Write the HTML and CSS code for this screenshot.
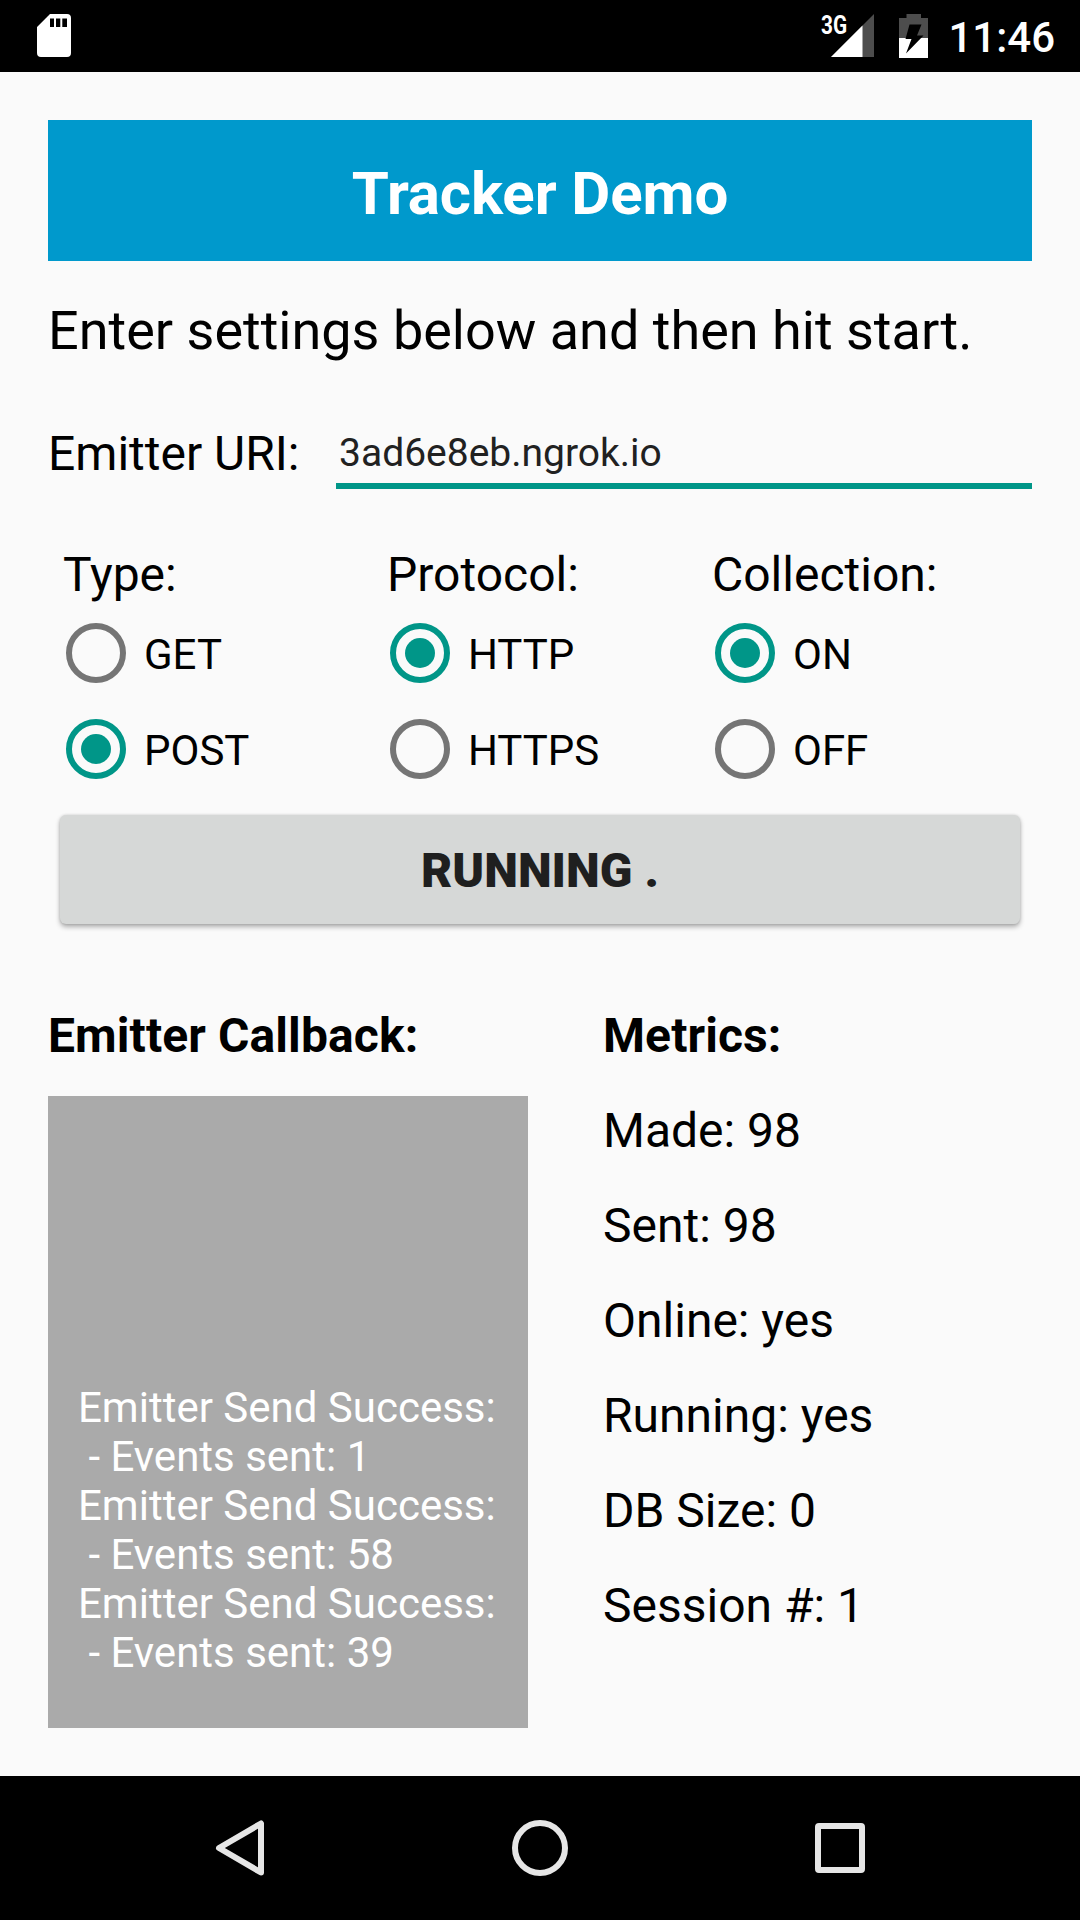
FILE: index.html
```html
<!DOCTYPE html>
<html lang="en">
<head>
<meta charset="utf-8">
<title>Tracker Demo</title>
<link rel="stylesheet" href="styles.css">
</head>
<body>
<header class="status-bar">
  <svg class="sd-icon" width="34" height="43" viewBox="0 0 34 43"><path fill="#fff" fill-rule="evenodd" d="M13 0H30a4 4 0 0 1 4 4V39a4 4 0 0 1-4 4H4a4 4 0 0 1-4-4V13ZM13 4.500V13H17V4.500ZM19 4.500V13H23.300V4.500ZM25.300 4.500V13H30V4.500Z"/></svg>
  <div class="status-right">
    <span class="network">3G</span>
    <svg class="signal" width="43" height="43" viewBox="0 0 43 43"><path fill="#4d4d4d" d="M43 0V43H0Z"/><path fill="#fff" d="M31.500 11.500V43H0Z"/></svg>
    <svg class="battery" width="29" height="44" viewBox="0 0 29 44"><path fill="#4d4d4d" d="M7.500 0H22V4H29V24H0V4H7.500Z"/><path fill="#fff" d="M0 24H29V44H0Z"/><path d="M10.500 10.500H22.500L18 21.500H24.500L7 39.500L12.500 25H6.500Z"/></svg>
    <time class="clock">11:46</time>
  </div>
</header>
<main class="screen">
  <h1 class="title">Tracker Demo</h1>
  <p class="intro">Enter settings below and then hit start.</p>
  <div class="uri-row">
    <label class="label" for="uri">Emitter URI:</label>
    <input class="uri" id="uri" type="text" value="3ad6e8eb.ngrok.io">
  </div>
  <div class="options">
    <section class="group">
      <h2 class="label">Type:</h2>
      <label class="radio"><span class="dot"></span>GET</label>
      <label class="radio"><span class="dot on"></span>POST</label>
    </section>
    <section class="group">
      <h2 class="label">Protocol:</h2>
      <label class="radio"><span class="dot on"></span>HTTP</label>
      <label class="radio"><span class="dot"></span>HTTPS</label>
    </section>
    <section class="group">
      <h2 class="label">Collection:</h2>
      <label class="radio"><span class="dot on"></span>ON</label>
      <label class="radio"><span class="dot"></span>OFF</label>
    </section>
  </div>
  <button class="run">RUNNING .</button>
  <div class="results">
    <section class="callback">
      <h2 class="heading">Emitter Callback:</h2>
      <pre class="log">Emitter Send Success:
 - Events sent: 1
Emitter Send Success:
 - Events sent: 58
Emitter Send Success:
 - Events sent: 39</pre>
    </section>
    <section class="metrics">
      <h2 class="heading">Metrics:</h2>
      <p class="metric">Made: 98</p>
      <p class="metric">Sent: 98</p>
      <p class="metric">Online: yes</p>
      <p class="metric">Running: yes</p>
      <p class="metric">DB Size: 0</p>
      <p class="metric">Session #: 1</p>
    </section>
  </div>
</main>
<nav class="nav-bar">
  <svg width="60" height="60" viewBox="0 0 60 60"><path d="M51 5.500V54.500L9 30Z"/></svg>
  <svg width="60" height="60" viewBox="0 0 60 60"><circle cx="30" cy="30" r="25"/></svg>
  <svg width="60" height="60" viewBox="0 0 60 60"><rect x="8" y="8" width="44" height="44" rx="1"/></svg>
</nav>
</body>
</html>
```

FILE: styles.css
```css
* { box-sizing: border-box; margin: 0; }
body {
  width: 1080px;
  height: 1920px;
  display: flex;
  flex-direction: column;
  background: #fafafa;
  color: #000;
  font-family: Roboto, sans-serif;
  overflow: hidden;
}
svg { display: block; }

.status-bar {
  height: 72px;
  flex: none;
  display: flex;
  align-items: flex-start;
  justify-content: space-between;
  padding: 14px 25px 0 37px;
  background: #000;
  color: #fff;
}
.status-right { display: flex; align-items: flex-start; }
.network {
  margin: -1px -22px 0 0;
  font: 700 26px/24px Roboto, sans-serif;
  transform: scaleX(.8);
  transform-origin: left;
}
.battery { margin-left: 25px; }
.clock {
  margin: 1px 0 0 20px;
  font-size: 42px;
  font-weight: 500;
  line-height: 46px;
}

.screen { flex: 1; padding: 48px 48px 0; }
.title {
  height: 141px;
  background: #0099cc;
  color: #fff;
  font-size: 60px;
  letter-spacing: -.1px;
  line-height: 147px;
  text-align: center;
}
.intro { margin-top: 36px; font-size: 54px; line-height: 67px; }

.uri-row { display: flex; height: 72px; margin-top: 53px; }
.label { font-size: 48px; font-weight: 400; line-height: 56px; white-space: nowrap; }
.uri-row .label { flex: none; width: 288px; padding-top: 9px; }
.uri {
  flex: 1;
  min-width: 0;
  padding: 5px 3px 0;
  border: 0;
  border-bottom: 6px solid #009688;
  outline: 0;
  background: transparent;
  color: #212121;
  font: 39px Roboto, sans-serif;
}

.options { display: grid; grid-template-columns: 324px 325px 324px; margin-top: 58px; padding-left: 15px; }
.group .label { margin-bottom: 2px; }
.radio {
  display: flex;
  align-items: center;
  gap: 18px;
  height: 96px;
  padding: 4px 0 0 3px;
  font-size: 42px;
  line-height: 50px;
}
.dot {
  flex: none;
  display: grid;
  place-items: center;
  width: 60px;
  height: 60px;
  margin-top: -4px;
  border: 6px solid #757575;
  border-radius: 50%;
}
.dot.on { border-color: #009688; }
.dot.on::after { content: ""; width: 30px; height: 30px; border-radius: 50%; background: #009688; }

.run {
  display: block;
  width: 960px;
  height: 109px;
  margin: 18px 12px 0;
  padding: 3px 0 0;
  border: 0;
  border-radius: 6px;
  background: #d6d8d7;
  box-shadow: 0 3px 5px rgba(0, 0, 0, .3), 0 0 3px rgba(0, 0, 0, .15);
  color: #1f1f1f;
  font: 900 48px/56px Roboto, sans-serif;
}

.results { display: grid; grid-template-columns: 480px 1fr; column-gap: 75px; margin-top: 83px; }
.heading { font-size: 48px; letter-spacing: .1px; line-height: 57px; }
.log {
  height: 632px;
  margin-top: 32px;
  padding: 287px 30px 0;
  background: #aaa;
  color: #fff;
  font: 42px/49px Roboto, sans-serif;
}
.metric { margin-top: 38px; font-size: 48px; line-height: 57px; }

.nav-bar {
  flex: none;
  height: 144px;
  display: flex;
  align-items: center;
  justify-content: space-between;
  padding: 0 210px;
  background: #000;
}
.nav-bar path, .nav-bar circle, .nav-bar rect {
  fill: none;
  stroke: #e6e6e6;
  stroke-width: 6;
  stroke-linejoin: round;
}
```
